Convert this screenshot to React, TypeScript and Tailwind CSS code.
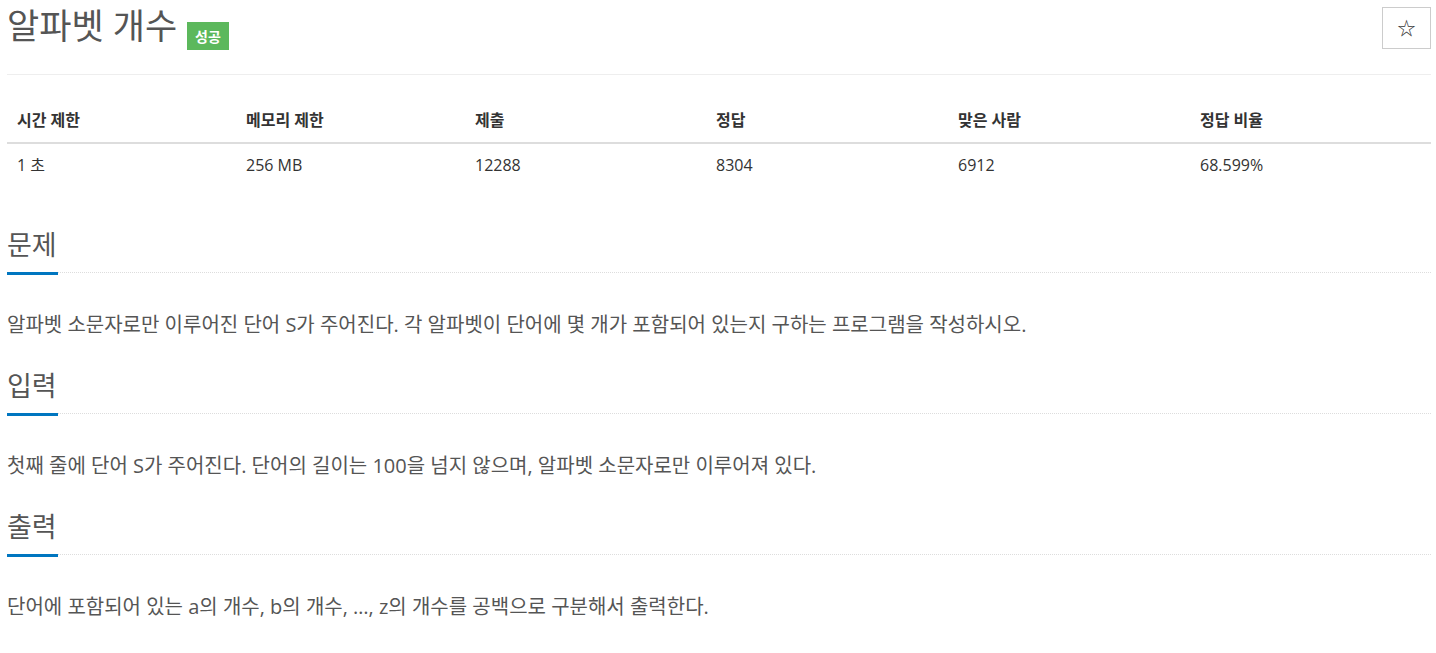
import React from "react"

const font = { fontFamily: '"Open Sans", "Noto Sans CJK KR", sans-serif' }

const stats = [
  ["시간 제한", "1 초"],
  ["메모리 제한", "256 MB"],
  ["제출", "12288"],
  ["정답", "8304"],
  ["맞은 사람", "6912"],
  ["정답 비율", "68.599%"],
]

const sections = [
  {
    title: "문제",
    body: "알파벳 소문자로만 이루어진 단어 S가 주어진다. 각 알파벳이 단어에 몇 개가 포함되어 있는지 구하는 프로그램을 작성하시오.",
  },
  {
    title: "입력",
    body: "첫째 줄에 단어 S가 주어진다. 단어의 길이는 100을 넘지 않으며, 알파벳 소문자로만 이루어져 있다.",
  },
  {
    title: "출력",
    body: "단어에 포함되어 있는 a의 개수, b의 개수, …, z의 개수를 공백으로 구분해서 출력한다.",
  },
]

const Section = ({ title, body, first }: { title: string; body: string; first?: boolean }) => (
  <section className={first ? "mt-[44px]" : "mt-[31px]"}>
    <h2 className="text-[27px] leading-[30px] text-[#555] font-normal">{title}</h2>
    <div className="mt-[12px] flex items-start">
      <div className="w-[51px] h-[3px] bg-[#0076c0]" />
      <div className="flex-1 border-t border-dotted border-[#ddd]" />
    </div>
    <p className="mt-[35px] text-[20px] leading-[30px] text-[#555]">{body}</p>
  </section>
)

export default function App() {
  return (
    <div className="w-[1436px] min-h-[653px] bg-white pl-[7px] pr-[5px]" style={font}>
      <div className="h-[75px] border-b border-[#eee] flex justify-between items-start">
        <div className="flex items-start mt-[6px]">
          <h1 className="text-[35px] leading-[40px] text-[#555] font-normal">알파벳 개수</h1>
          <span className="ml-[10px] mt-[16px] h-[28px] px-[8px] bg-[#5cb85c] text-white text-[14px] font-bold flex items-center">
            성공
          </span>
        </div>
        <button className="mt-[7px] w-[49px] h-[42px] border border-[#ccc] bg-white text-[#333] text-[18px] flex items-center justify-center">
          ☆
        </button>
      </div>

      <div className="mt-[23px] grid grid-cols-[229px_229px_241px_242px_242px_1fr] text-[16px]">
        {stats.map(([h]) => (
          <div key={h} className="h-[44px] leading-[44px] pl-[10px] font-bold text-[#333] border-b-2 border-[#ddd] box-content">
            {h}
          </div>
        ))}
        {stats.map(([h, v]) => (
          <div key={h + v} className="h-[42px] leading-[42px] pl-[10px] text-[#333]">
            {v}
          </div>
        ))}
      </div>

      {sections.map((s, i) => (
        <Section key={s.title} title={s.title} body={s.body} first={i === 0} />
      ))}
    </div>
  )
}
